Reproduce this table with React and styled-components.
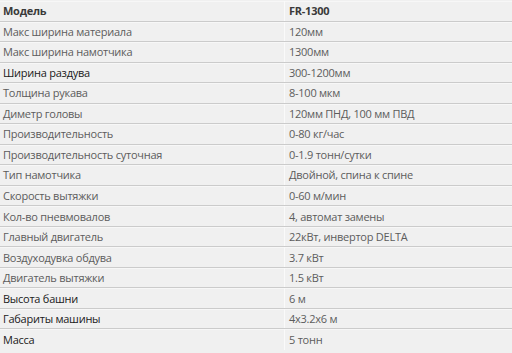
import React from "react";
import styled, { createGlobalStyle } from "styled-components";

const rows = [
  { name: "Модель", value: "FR-1300", head: true },
  { name: "Макс ширина материала", value: "120мм" },
  { name: "Макс ширина намотчика", value: "1300мм" },
  { name: "Ширина раздува", value: "300-1200мм", dark: true },
  { name: "Толщина рукава", value: "8-100 мкм" },
  { name: "Диметр головы", value: "120мм ПНД, 100 мм ПВД" },
  { name: "Производительность", value: "0-80 кг/час" },
  { name: "Производительность суточная", value: "0-1.9 тонн/сутки" },
  { name: "Тип намотчика", value: "Двойной, спина к спине" },
  { name: "Скорость вытяжки", value: "0-60 м/мин" },
  { name: "Кол-во пневмовалов", value: "4, автомат замены" },
  { name: "Главный двигатель", value: "22кВт, инвертор DELTA" },
  { name: "Воздуходувка обдува", value: "3.7 кВт" },
  { name: "Двигатель вытяжки", value: "1.5 кВт" },
  { name: "Высота башни", value: "6 м", dark: true },
  { name: "Габариты машины", value: "4x3.2x6 м", dark: true },
  { name: "Масса", value: "5 тонн", dark: true },
];

const GlobalStyle = createGlobalStyle`
  body {
    margin: 0;
    background: #ffffff;
    font-family: "Open Sans", "Noto Sans", sans-serif;
  }
`;

const Table = styled.div`
  width: 512px;
  height: 353px;
  padding: 1px 0 3px;
  box-sizing: border-box;
  display: grid;
  grid-template-rows: repeat(17, 1fr);
  background: #f0f0f0;
`;

const Row = styled.div`
  display: grid;
  grid-template-columns: 284px 1fr;
  border-bottom: 1px solid #cbcbcb;
  box-shadow: inset 0 1px 0 #f7f7f7;

  &:last-child {
    border-bottom: none;
  }
`;

const Cell = styled.div`
  display: flex;
  align-items: center;
  padding-left: ${(p) => (p.$value ? "4px" : "3px")};
  border-left: ${(p) => (p.$value ? "1px solid #fafafa" : "none")};
  font-size: 11px;
  letter-spacing: -0.25px;
  font-weight: ${(p) => (p.$head ? 700 : 400)};
  color: ${(p) => (p.$head ? "#3a3a3a" : p.$dark ? "#1a1a1a" : "#5c5c5c")};
  white-space: nowrap;
`;

export default function App() {
  return (
    <>
      <GlobalStyle />
      <Table>
        {rows.map((r) => (
          <Row key={r.name}>
            <Cell $head={r.head} $dark={r.dark}>
              {r.name}
            </Cell>
            <Cell $value $head={r.head}>
              {r.value}
            </Cell>
          </Row>
        ))}
      </Table>
    </>
  );
}
